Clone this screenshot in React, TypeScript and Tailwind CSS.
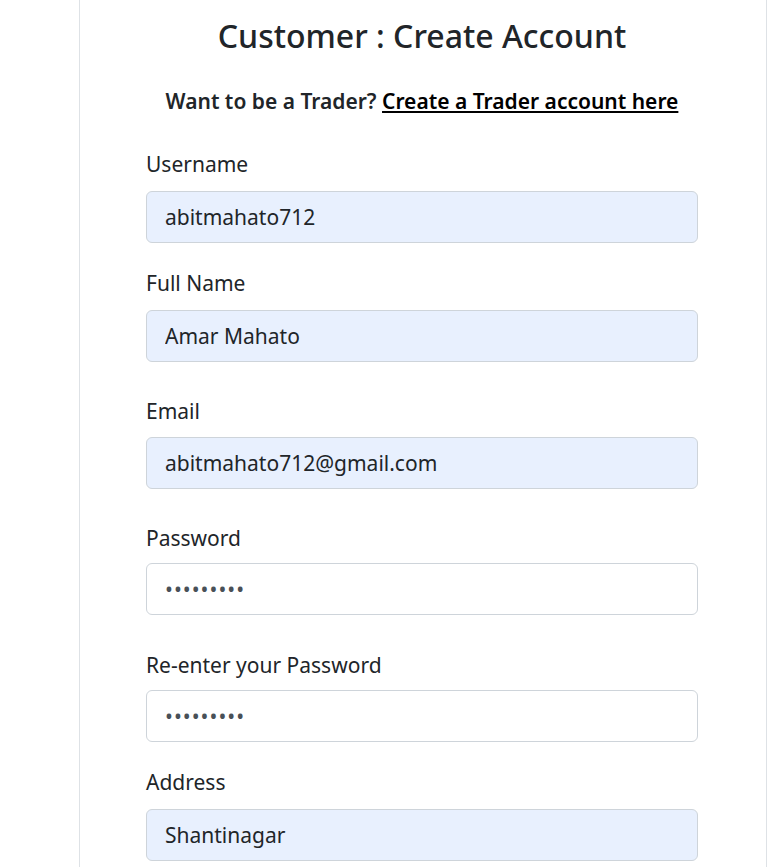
import React from "react";

type Field = {
  label: string;
  value: string;
  type?: string;
  filled?: boolean;
  gap: string;
  labelGap: string;
};

const fields: Field[] = [
  { label: "Username", value: "abitmahato712", filled: true, gap: "mt-[33px]", labelGap: "mt-[12px]" },
  { label: "Full Name", value: "Amar Mahato", filled: true, gap: "mt-[25px]", labelGap: "mt-[12px]" },
  { label: "Email", value: "abitmahato712@gmail.com", filled: true, gap: "mt-[34px]", labelGap: "mt-[11px]" },
  { label: "Password", value: "abitmahat", type: "password", gap: "mt-[34px]", labelGap: "mt-[10px]" },
  { label: "Re-enter your Password", value: "abitmahat", type: "password", gap: "mt-[35px]", labelGap: "mt-[10px]" },
  { label: "Address", value: "Shantinagar", filled: true, gap: "mt-[25px]", labelGap: "mt-[12px]" },
];

const FormField = ({ label, value, type, filled, gap, labelGap }: Field) => {
  const isPass = type === "password";
  return (
    <div className={gap}>
      <label className="block text-[21px] leading-[30px] text-[#212529]">{label}</label>
      <input
        readOnly
        type={type || "text"}
        value={value}
        className={
          labelGap +
          " block h-[52px] w-full rounded-[6px] border border-[#ced4da] px-[18px] text-[21px] outline-none " +
          (filled ? "bg-[#e8f0fe] " : "bg-white ") +
          (isPass ? "tracking-[1px] text-[#495057]" : "text-[#212529]")
        }
      />
    </div>
  );
};

export default function App() {
  return (
    <div className="min-h-[867px] bg-white font-['Noto_Sans',sans-serif]">
      <div className="ml-[79px] mr-[4px] min-h-[867px] border-x border-[#dee2e6] pl-[66px] pr-[68px] pt-[16px]">
        <h1 className="text-center text-[32px] font-medium leading-[40px] text-[#212529]">
          Customer : Create Account
        </h1>
        <p className="mt-[30px] text-center text-[21px] font-semibold leading-[30px] text-[#212529]">
          Want to be a Trader?{" "}
          <a href="#" className="text-black underline">
            Create a Trader account here
          </a>
        </p>
        <div>
          {fields.map((f) => (
            <FormField key={f.label} {...f} />
          ))}
        </div>
      </div>
    </div>
  );
}
